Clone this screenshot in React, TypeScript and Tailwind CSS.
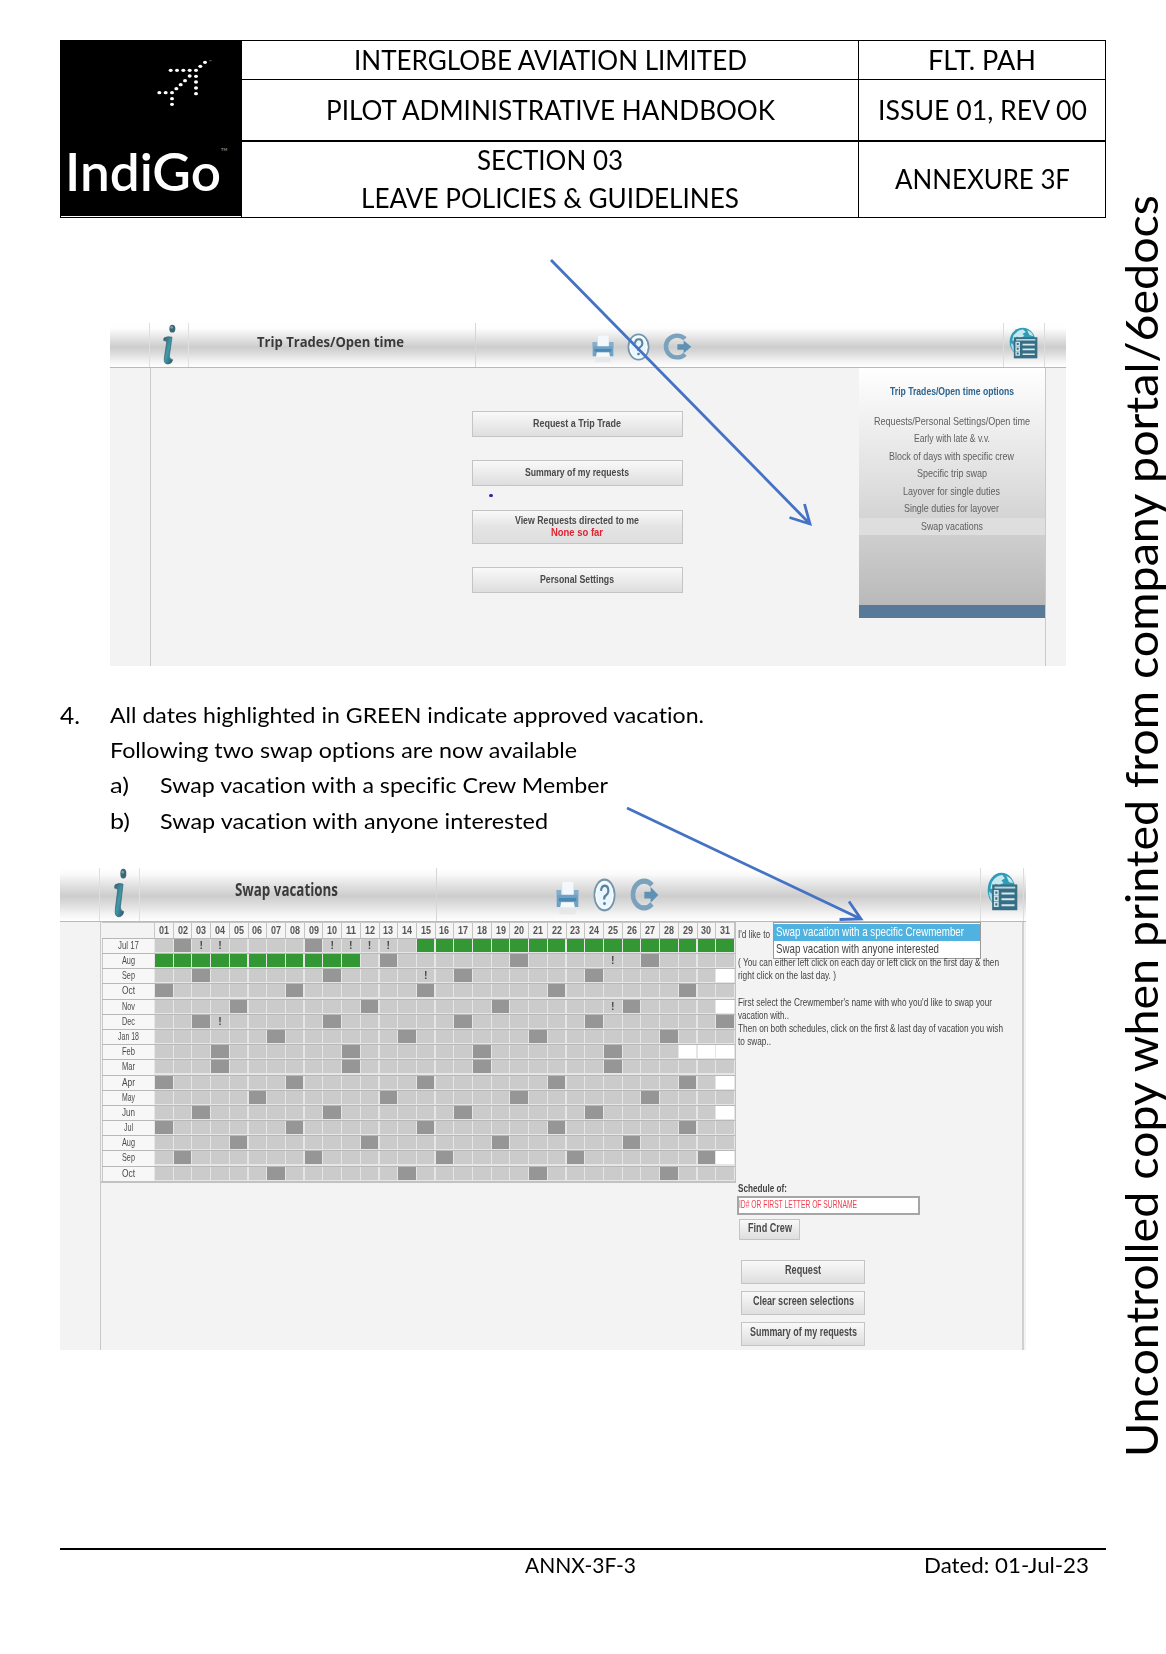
import { useLayoutEffect, useRef, type ReactNode } from "react";

/* A single line of text condensed or stretched to an exact measure. */
function Fit({ w, vertical, children }: { w: number; vertical?: boolean; children: ReactNode }) {
  const ref = useRef<HTMLSpanElement>(null);
  useLayoutEffect(() => {
    const el = ref.current;
    if (!el) return;
    el.style.transform = "none";
    const box = el.getBoundingClientRect();
    el.style.transform = vertical ? `scaleY(${w / box.height})` : `scaleX(${w / box.width})`;
  }, [w, vertical]);
  return (
    <span className="inline-block shrink-0 whitespace-nowrap text-left" style={vertical ? { height: w } : { width: w }}>
      <span ref={ref} className="inline-block origin-top-left whitespace-nowrap">
        {children}
      </span>
    </span>
  );
}

const dots: [number, number][] = [
  [465, 97], [451, 109], [438, 121], [419, 138], [405, 152], [392, 164], [379, 176], [366, 188],
  [362, 121], [381, 121], [400, 121], [419, 121],
  [438, 139], [438, 156], [438, 174], [438, 191],
  [328, 188], [347, 188], [366, 206], [366, 223],
];

function Logo() {
  return (
    <div className="h-[175px] w-full bg-black text-white">
      <svg viewBox="33 33 540 300" className="block h-[100px] w-[180px]">
        {dots.map(([x, y]) => (
          <ellipse key={`${x}-${y}`} cx={x} cy={y} rx="6" ry="5" fill="#fff" />
        ))}
        <path d="M478 92h7" stroke="#999" strokeWidth="2" />
      </svg>
      <div className="flex pt-px pl-[4px] text-[52px] leading-[58px] font-semibold">
        <Fit w={156}>IndiGo</Fit>
        <span className="pt-[6px] text-[4px] leading-none text-gray-400">TM</span>
      </div>
    </div>
  );
}

function InfoIcon({ className }: { className: string }) {
  return (
    <svg viewBox="0 0 42 124" preserveAspectRatio="none" className={className}>
      <defs>
        <linearGradient id="info" x1="0" x2="1" y1="0" y2="1">
          <stop offset="0" stopColor="#37606b" />
          <stop offset="0.5" stopColor="#3f9aad" />
          <stop offset="1" stopColor="#2b5662" />
        </linearGradient>
      </defs>
      <ellipse cx="31" cy="14" rx="9" ry="12" fill="#3d6873" />
      <ellipse cx="29" cy="10" rx="4" ry="4" fill="#67a7b5" />
      <path
        d="M6 42Q18 36 30 40L22 96Q21 106 32 108Q30 120 18 121Q4 121 7 102L14 56Q13 49 5 50Z"
        fill="url(#info)"
        stroke="#34606c"
        strokeWidth="2"
      />
    </svg>
  );
}

function PrinterIcon({ className }: { className: string }) {
  return (
    <svg viewBox="0 0 66 84" preserveAspectRatio="none" className={className}>
      <rect x="18" y="2" width="32" height="34" fill="#f3f8fc" />
      <path d="M2 22h12v12h38V22h12v42H52V52H14v12H2Z" fill="#6da2c6" />
      <path d="M2 22h12v12h38V22h12v12H2Z" fill="#86aec9" />
      <path d="M8 42h50v8H8z" fill="#4a87b3" />
      <path d="M15 53h36l3 12H12Z" fill="#f6fafd" />
      <path d="M10 70h46v12H10z" fill="#dfe6ea" opacity="0.7" />
    </svg>
  );
}

function HelpIcon({ className }: { className: string }) {
  return (
    <svg viewBox="0 0 66 84" preserveAspectRatio="none" className={className}>
      <ellipse cx="33" cy="42" rx="29" ry="38" fill="#e9f6fd" stroke="#7396ac" strokeWidth="5" />
      <ellipse cx="33" cy="42" rx="24" ry="32" fill="none" stroke="#fafdff" strokeWidth="3" />
      <path d="M23 32Q24 19 34 19T44 32Q44 39 37 43T33 53" fill="none" stroke="#57819e" strokeWidth="6" />
      <circle cx="33" cy="63" r="4" fill="#57819e" />
    </svg>
  );
}

function ExitIcon({ className }: { className: string }) {
  return (
    <svg viewBox="0 0 86 84" preserveAspectRatio="none" className={className}>
      <path d="M66 18A32 34 0 1 0 66 66" fill="none" stroke="#7ba2bd" strokeWidth="13" />
      <path d="M44 35H62V23L84 43L62 63V52H44Z" fill="#5f91b3" />
    </svg>
  );
}

function GlobeListIcon({ className }: { className: string }) {
  return (
    <svg viewBox="0 0 90 100" preserveAspectRatio="none" className={className}>
      <ellipse cx="42" cy="46" rx="40" ry="44" fill="#2f9cb8" />
      <path d="M14 26Q28 8 44 8L52 16L42 22L48 28L34 34L24 30L20 44L10 42Z" fill="#c8e8ef" />
      <path d="M56 10Q70 14 76 28L64 26Z" fill="#c8e8ef" />
      <path d="M6 50L14 56L16 78Q6 66 6 50Z" fill="#a8d9e4" />
      <rect x="15" y="32" width="73" height="66" fill="#366f85" />
      <path d="M22 40h60" stroke="#b9d4dc" strokeWidth="5" />
      <path d="M42 55h38M42 70h38M42 85h38" stroke="#d6e8ed" strokeWidth="5" />
      <path d="M22 48h10v10H22zM22 63h10v10H22zM22 78h10v10H22z" fill="none" stroke="#cfe3e9" strokeWidth="4" />
    </svg>
  );
}

function Button({ w, className, children }: { w: number; className: string; children: ReactNode }) {
  return (
    <div
      className={`flex items-center justify-center border-[1.5px] border-[#c4c4c4] bg-linear-to-b from-[#f9f9f9] to-[#dedede] pb-[2px] font-bold text-[#4a4a4a] ${className}`}
    >
      <Fit w={w}>{children}</Fit>
    </div>
  );
}

const menu: [string, number][] = [
  ["Requests/Personal Settings/Open time", 156],
  ["Early with late & v.v.", 76],
  ["Block of days with specific crew", 125],
  ["Specific trip swap", 70],
  ["Layover for single duties", 97],
  ["Single duties for layover", 95],
  ["Swap vacations", 62],
];

function TripTrades() {
  return (
    <section className="ml-[110px] mt-[105px] h-[343px] w-[956px] bg-[#f3f3f3] font-['Liberation_Sans',sans-serif] blur-[0.4px]">
      <header className="flex h-[45px] border-b-[1.5px] border-[#b9b9b9] bg-[linear-gradient(to_bottom,#fff_0%,#fdfdfd_12%,#e2e2e2_36%,#cdcdcd_55%,#dadada_68%,#f4f4f4_88%,#fff_100%)]">
        <div className="w-[40px] border-r border-[#dedede]" />
        <div className="w-[39px] border-r border-[#dde1e1] pl-[12px] pt-px">
          <InfoIcon className="h-[41px] w-[14px]" />
        </div>
        <div className="flex w-[287px] justify-center border-r border-[#d6d6d6] pt-[8px] pr-1 font-['Open_Sans',sans-serif] text-[15px] leading-5 font-bold text-[#3a3a3a]">
          <Fit w={147}>Trip Trades/Open time</Fit>
        </div>
        <div className="flex flex-1 pl-[116px] pt-[10px]">
          <PrinterIcon className="mt-[2px] h-[28px] w-[22px]" />
          <HelpIcon className="ml-[13px] h-[28px] w-[23px]" />
          <ExitIcon className="ml-[12px] h-[27px] w-[30px]" />
        </div>
        <div className="w-[42px] border-x border-[#dcdcdc] pl-[5px] pt-[4px]">
          <GlobeListIcon className="h-[32px] w-[29px]" />
        </div>
        <div className="w-[21px]" />
      </header>
      <div className="flex h-[298px]">
        <div className="w-[40.5px] border-r-[1.5px] border-[#c9c9c9]" />
        <div className="flex-1 pl-[321px] pt-[43px] text-[11.5px] leading-[12px]">
          <Button w={88} className="h-[26px] w-[211px]">Request a Trip Trade</Button>
          <Button w={104} className="mt-[23px] h-[26px] w-[211px]">Summary of my requests</Button>
          <div className="h-[24px] pl-[17px] pt-[8px]">
            <div className="h-[3px] w-[4px] rounded-full bg-[#2b2ba0]" />
          </div>
          <div className="flex h-[34px] w-[211px] flex-col items-center justify-center border-[1.5px] border-[#c4c4c4] bg-linear-to-b from-[#f9f9f9] via-[#e4e4e4] to-[#dedede] pb-[3px] font-bold text-[#4a4a4a]">
            <Fit w={124}>View Requests directed to me</Fit>
            <span className="text-[#e02232]"><Fit w={52}>None so far</Fit></span>
          </div>
          <Button w={74} className="mt-[23px] h-[26px] w-[211px]">Personal Settings</Button>
        </div>
        <div className="w-[187px] border-r-[1.5px] border-[#c9c9c9] text-[11.5px] text-[#606060]">
          <div className="flex h-[237px] flex-col items-center bg-linear-to-b from-white via-[#dedede] to-[#b9b9b9] pt-[15px] leading-[17.5px]">
            <div className="mb-[12px] font-bold text-[#2d6490]"><Fit w={124}>Trip Trades/Open time options</Fit></div>
            {menu.map(([label, w], i) => (
              <div key={label} className={`flex h-[17.5px] w-full justify-center ${i === 6 ? "bg-[#dedede]" : ""}`}>
                <Fit w={w}>{label}</Fit>
              </div>
            ))}
          </div>
          <div className="h-[13px] bg-[#587a98]" />
        </div>
        <div className="w-[20.5px]" />
      </div>
    </section>
  );
}

type Row = { m: string; dark?: number[]; mark?: number[]; green?: [number, number]; last?: number };

const rows: Row[] = [
  { m: "Jul 17", dark: [2, 9], mark: [3, 4, 10, 11, 12, 13], green: [15, 31] },
  { m: "Aug", dark: [13, 20, 27], mark: [25], green: [1, 11] },
  { m: "Sep", dark: [3, 10, 17, 24], mark: [15], last: 30 },
  { m: "Oct", dark: [1, 8, 15, 22, 29] },
  { m: "Nov", dark: [5, 12, 19, 26], mark: [25], last: 30 },
  { m: "Dec", dark: [3, 10, 17, 24, 31], mark: [4] },
  { m: "Jan 18", dark: [7, 14, 21, 28] },
  { m: "Feb", dark: [4, 11, 18, 25], last: 28 },
  { m: "Mar", dark: [4, 11, 18, 25] },
  { m: "Apr", dark: [1, 8, 15, 22, 29], last: 30 },
  { m: "May", dark: [6, 13, 20, 27] },
  { m: "Jun", dark: [3, 10, 17, 24], last: 30 },
  { m: "Jul", dark: [1, 8, 15, 22, 29] },
  { m: "Aug", dark: [5, 12, 19, 26] },
  { m: "Sep", dark: [2, 9, 16, 23, 30], last: 30 },
  { m: "Oct", dark: [7, 14, 21, 28] },
];

const days = Array.from({ length: 31 }, (_, i) => i + 1);

function cellColour(r: Row, d: number) {
  if (r.green && d >= r.green[0] && d <= r.green[1]) return "bg-[#339833]";
  if (r.dark?.includes(d)) return "bg-[#969696]";
  if (r.last && d > r.last) return "bg-white";
  return "bg-[#cbcbcb]";
}

function Calendar() {
  return (
    <div className="w-[635px] border-r border-b-2 border-[#c2c2c2] pl-px">
      <div className="grid h-[16px] grid-cols-[53px_repeat(31,minmax(0,1fr))] border-t border-[#c8c8c8] text-[11px] leading-[14px] font-bold text-[#555]">
        <div className="border-r border-[#c8c8c8]" />
        {days.map((d) => (
          <div key={d} className="flex justify-center border-r border-[#c4c4c4] bg-[#f5f5f5]">
            <Fit w={10}>{String(d).padStart(2, "0")}</Fit>
          </div>
        ))}
      </div>
      {rows.map((r, i) => (
        <div
          key={i}
          className="grid h-[15.2px] grid-cols-[53px_repeat(31,minmax(0,1fr))] border-t-[1.2px] border-[#b8b8b8] bg-[#e6e6e6] text-[10.5px] leading-[13px] text-[#4b4b4b]"
        >
          <div className="mr-px flex justify-center border-l border-[#c8c8c8] bg-[#f7f7f7]">
            <Fit w={r.m.length > 3 ? 21 : r.m === "Jul" ? 9 : 13}>{r.m}</Fit>
          </div>
          {days.map((d) => (
            <div key={d} className={`mr-[1.2px] mb-[1.2px] text-center font-bold ${cellColour(r, d)}`}>
              {r.mark?.includes(d) ? "!" : ""}
            </div>
          ))}
        </div>
      ))}
    </div>
  );
}

function SwapVacations() {
  return (
    <section className="ml-[60px] mt-[29px] h-[482px] w-[966px] bg-[#f3f3f3] font-['Liberation_Sans',sans-serif] blur-[0.4px]">
      <header className="flex h-[54px] border-b-[1.5px] border-[#b9b9b9] bg-[linear-gradient(to_bottom,#fff_0%,#fafafa_12%,#e2e2e2_32%,#cdcdcd_53%,#dadada_66%,#f4f4f4_88%,#fff_100%)]">
        <div className="w-[40px] border-r border-[#dedede]" />
        <div className="w-[40px] border-r border-[#dde1e1] pl-[13px]">
          <InfoIcon className="h-[50px] w-[14px]" />
        </div>
        <div className="flex w-[297px] justify-center border-r border-[#d6d6d6] pt-[11px] pr-[4px] font-['Open_Sans',sans-serif] text-[17px] leading-[22px] font-bold text-[#3a3a3a]">
          <Fit w={103}>Swap vacations</Fit>
        </div>
        <div className="flex flex-1 pl-[119px] pt-[10px]">
          <PrinterIcon className="mt-[3px] h-[34px] w-[23px]" />
          <HelpIcon className="ml-[14px] h-[34px] w-[23px]" />
          <ExitIcon className="ml-[13px] h-[33px] w-[30px]" />
        </div>
        <div className="w-[44px] border-x border-[#dcdcdc] pl-[6px] pt-[4px]">
          <GlobeListIcon className="h-[39px] w-[31px]" />
        </div>
        <div className="w-[2px]" />
      </header>
      <div className="flex h-[428px]">
        <div className="w-[41px] border-r-[1.5px] border-[#c9c9c9]" />
        <div className="h-full">
          <Calendar />
        </div>
        <div className="relative flex-1 border-r-[2px] border-[#d0d0d0] pl-[2px] text-[11.5px] leading-[13px] text-[#444]">
          <div className="pt-[6px]"><Fit w={32}>I'd like to</Fit></div>
          <div className="absolute top-0 left-[37px] h-[37px] w-[208px] border-[1.5px] border-[#999] bg-white pt-px text-[13.5px] leading-[16px]">
            <div className="flex h-[17px] bg-[#50b2e0] pl-[2px] text-white"><Fit w={188}>Swap vacation with a specific Crewmember</Fit></div>
            <div className="flex pl-[2px]"><Fit w={163}>Swap vacation with anyone interested</Fit></div>
          </div>
          <div className="flex flex-col pt-[15px]">
            <Fit w={261}>( You can either left click on each day or left click on the first day &amp; then</Fit>
            <Fit w={98}>right click on the last day. )</Fit>
            <div className="h-[14px]" />
            <Fit w={254}>First select the Crewmember's name with who you'd like to swap your</Fit>
            <Fit w={51}>vacation with..</Fit>
            <Fit w={265}>Then on both schedules, click on the first &amp; last day of vacation you wish</Fit>
            <Fit w={33}>to swap..</Fit>
          </div>
          <div className="mt-[134px] font-bold"><Fit w={49}>Schedule of:</Fit></div>
          <div className="mt-px -ml-px h-[19px] w-[183px] border-2 border-[#a5a5a5] bg-white text-[10.5px] text-[#f04050]">
            <Fit w={118}>ID# OR FIRST LETTER OF SURNAME</Fit>
          </div>
          <Button w={44} className="mt-[4px] ml-px h-[21px] w-[61px] text-[12px]">Find Crew</Button>
          <Button w={36} className="mt-[20px] ml-[3px] h-[24px] w-[124px] text-[12px]">Request</Button>
          <Button w={101} className="mt-[7px] ml-[3px] h-[24px] w-[124px] text-[12px]">Clear screen selections</Button>
          <Button w={107} className="mt-[7px] ml-[3px] h-[24px] w-[124px] text-[12px]">Summary of my requests</Button>
        </div>
        <div className="w-[2px]" />
      </div>
    </section>
  );
}

export default function App() {
  return (
    <div className="relative flex h-[1654px] w-[1166px] overflow-hidden bg-white font-['Lato',sans-serif] text-black [font-variant-ligatures:none]">
      <main className="w-[1106px] shrink-0 pt-[40px]">
        <div className="ml-[60px] grid h-[178px] w-[1046px] grid-cols-[181px_617px_246px] border border-black text-[27px]">
          <div className="border-r border-black">
            <Logo />
          </div>
          <div className="flex flex-col border-r border-black text-center">
            <div className="h-[39px] border-b border-black pt-px leading-[36px]"><Fit w={393}>INTERGLOBE AVIATION LIMITED</Fit></div>
            <div className="h-[62px] border-b-2 border-black pt-[12px] leading-[36px]"><Fit w={449}>PILOT ADMINISTRATIVE HANDBOOK</Fit></div>
            <div className="-mt-px flex flex-col items-center leading-[38px]">
              <Fit w={146}>SECTION 03</Fit>
              <Fit w={378}>LEAVE POLICIES &amp; GUIDELINES</Fit>
            </div>
          </div>
          <div className="text-center">
            <div className="h-[39px] border-b border-black pt-px leading-[36px]"><Fit w={108}>FLT. PAH</Fit></div>
            <div className="h-[62px] border-b-2 border-black pt-[12px] leading-[36px]"><Fit w={209}>ISSUE 01, REV 00</Fit></div>
            <div className="pt-[18px] leading-[38px]"><Fit w={175}>ANNEXURE 3F</Fit></div>
          </div>
        </div>

        <TripTrades />

        <div className="mt-[32px] ml-[60px] flex text-[21.5px] leading-[35.2px]">
          <div className="-mt-px w-[50px] text-[24px]"><Fit w={20}>4.</Fit></div>
          <div className="flex flex-col">
            <Fit w={594}>All dates highlighted in GREEN indicate approved vacation.</Fit>
            <Fit w={467}>Following two swap options are now available</Fit>
            <div className="flex">
              <span className="w-[50px]"><Fit w={19}>a)</Fit></span>
              <Fit w={448}>Swap vacation with a specific Crew Member</Fit>
            </div>
            <div className="flex">
              <span className="w-[50px]"><Fit w={20}>b)</Fit></span>
              <Fit w={388}>Swap vacation with anyone interested</Fit>
            </div>
          </div>
        </div>

        <SwapVacations />

        <footer className="mt-[198px] ml-[60px] flex w-[1046px] border-t-2 border-black pt-px pl-[465px] text-[22px] leading-[28px]">
          <Fit w={111}>ANNX-3F-3</Fit>
          <span className="ml-[288px]"><Fit w={165}>Dated: 01-Jul-23</Fit></span>
        </footer>
      </main>

      <aside className="flex w-[60px] shrink-0 pt-[195px] pl-[9px]">
        <div className="h-[1262px] w-[52px] rotate-180 text-[44px] leading-[52px] [writing-mode:vertical-rl]">
          <Fit w={1262} vertical>Uncontrolled copy when printed from company portal/6edocs</Fit>
        </div>
      </aside>

      <svg viewBox="0 0 1166 1654" className="pointer-events-none absolute inset-0 h-[1654px] w-[1166px]" fill="none" stroke="#4472c4" strokeWidth="2.8">
        <path d="M551 260L810 524M804.5 504L810 524L789.5 517.5" />
        <path d="M627 808L861 919M849 901.5L861 919L839.5 919.5" />
      </svg>
    </div>
  );
}
